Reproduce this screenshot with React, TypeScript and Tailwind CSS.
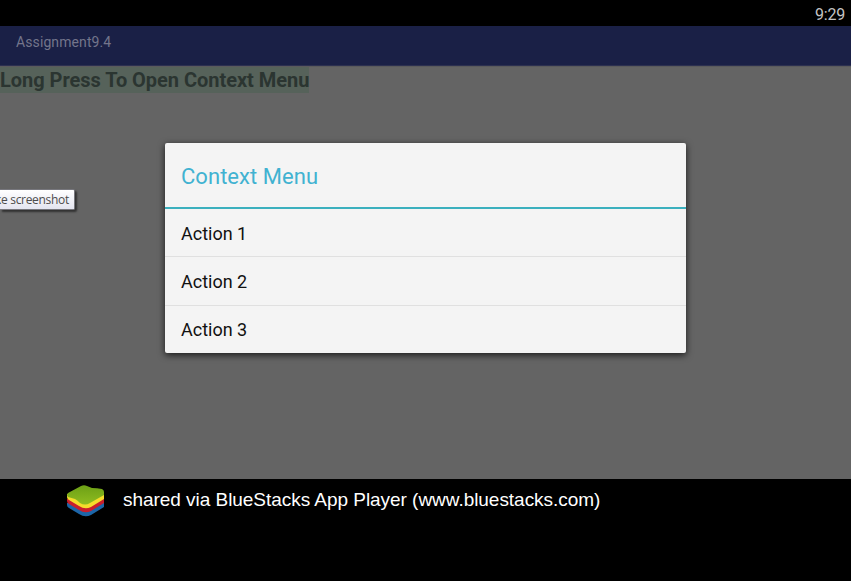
import React from 'react';

const actions = ['Action 1', 'Action 2', 'Action 3'];

function StatusBar() {
  return (
    <div className="flex h-[26px] shrink-0 items-center justify-end bg-black pr-[6px] pt-[3px]">
      <span className="text-[16px] leading-none tracking-[-0.2px] text-[#c4c4c4]">9:29</span>
    </div>
  );
}

function AppBar() {
  return (
    <header className="h-10 shrink-0 border-b border-[#2c3050] bg-[#1a2046] pl-4 pt-[6px]">
      <h1 className="text-[14px] leading-5 tracking-[0.1px] text-[#73758b]">Assignment9.4</h1>
    </header>
  );
}

function ContextMenu() {
  return (
    <div
      role="dialog"
      className="absolute left-[165px] top-[143px] flex h-[210px] w-[521px] flex-col rounded-[2px] bg-[#f4f4f4] shadow-[0_2px_7px_0_rgba(0,0,0,0.75)]"
    >
      <div className="flex h-[66px] shrink-0 items-center border-b-2 border-[#3bb0be] pl-4 pt-[4px]">
        <h2 className="text-[22px] leading-none tracking-[0.04px] text-[#41b2d1]">Context Menu</h2>
      </div>
      <ul className="flex flex-1 flex-col divide-y divide-[#e0e0e0]">
        {actions.map((label) => (
          <li key={label} className="flex flex-1 items-center pl-4 pt-[2px] text-[18px] leading-none text-[#111111]">
            {label}
          </li>
        ))}
      </ul>
    </div>
  );
}

function BlueStacksLogo() {
  return (
    <svg width="38" height="32" viewBox="0 0 38 32" aria-hidden="true">
      <defs>
        <linearGradient id="leaf" x1="0" y1="0" x2="0" y2="1">
          <stop offset="0" stopColor="#6c9f16" />
          <stop offset="1" stopColor="#8fbd20" />
        </linearGradient>
      </defs>
      <path d="M0 18H37V22L24 30Q18 33 12 29L2 23Q0 22 0 20Z" fill="#1c66a8" />
      <path d="M0 14H37V18L24 26Q18 29 12 25L2 19Q0 18 0 16Z" fill="#c91f2c" />
      <path d="M0 9H37V14L24 22Q18 25 12 21L2 15Q0 14 0 12Z" fill="#f5dc2b" />
      <path d="M1 8 14 1Q17-.5 20 1L25 3Q30 3 35 4Q37 5 37 7V10L23 18Q18 21 13 18Q10 15 8 14L1 12Q-1 10 1 8Z" fill="url(#leaf)" />
    </svg>
  );
}

export default function App() {
  return (
    <div className="relative flex h-[581px] w-[851px] flex-col overflow-hidden bg-black font-['Roboto',sans-serif]">
      <StatusBar />
      <AppBar />
      <main className="flex-1 border-t border-[#5a5a5c] bg-[#646464]">
        <p className="h-[26px] w-[309px] whitespace-nowrap bg-[#56625a] text-[20px] font-bold leading-[27px] tracking-[-0.03px] text-[#2b3531]">
          Long Press To Open Context Menu
        </p>
      </main>
      <footer className="flex h-[102px] shrink-0 bg-black pl-[67px] pt-[6px]">
        <BlueStacksLogo />
        <p className="ml-[18px] mt-[4px] whitespace-nowrap font-['Liberation_Sans',Arial,sans-serif] text-[19px] leading-[22px] tracking-[-0.04px] text-white">
          shared via BlueStacks App Player (www.bluestacks.com)
        </p>
      </footer>
      <ContextMenu />
      <div className="absolute left-0 top-[189px] flex h-[21px] w-[75px] items-center justify-end rounded-r-[2px] border border-l-0 border-[#77777d] bg-gradient-to-b from-white to-[#e4e5f0] pr-[5px] shadow-[2px_2px_2px_rgba(0,0,0,0.5)]">
        <span className="whitespace-nowrap font-['Open_Sans',sans-serif] text-[12px] leading-none tracking-[-0.3px] text-[#4c4c4c]">ke screenshot</span>
      </div>
    </div>
  );
}
